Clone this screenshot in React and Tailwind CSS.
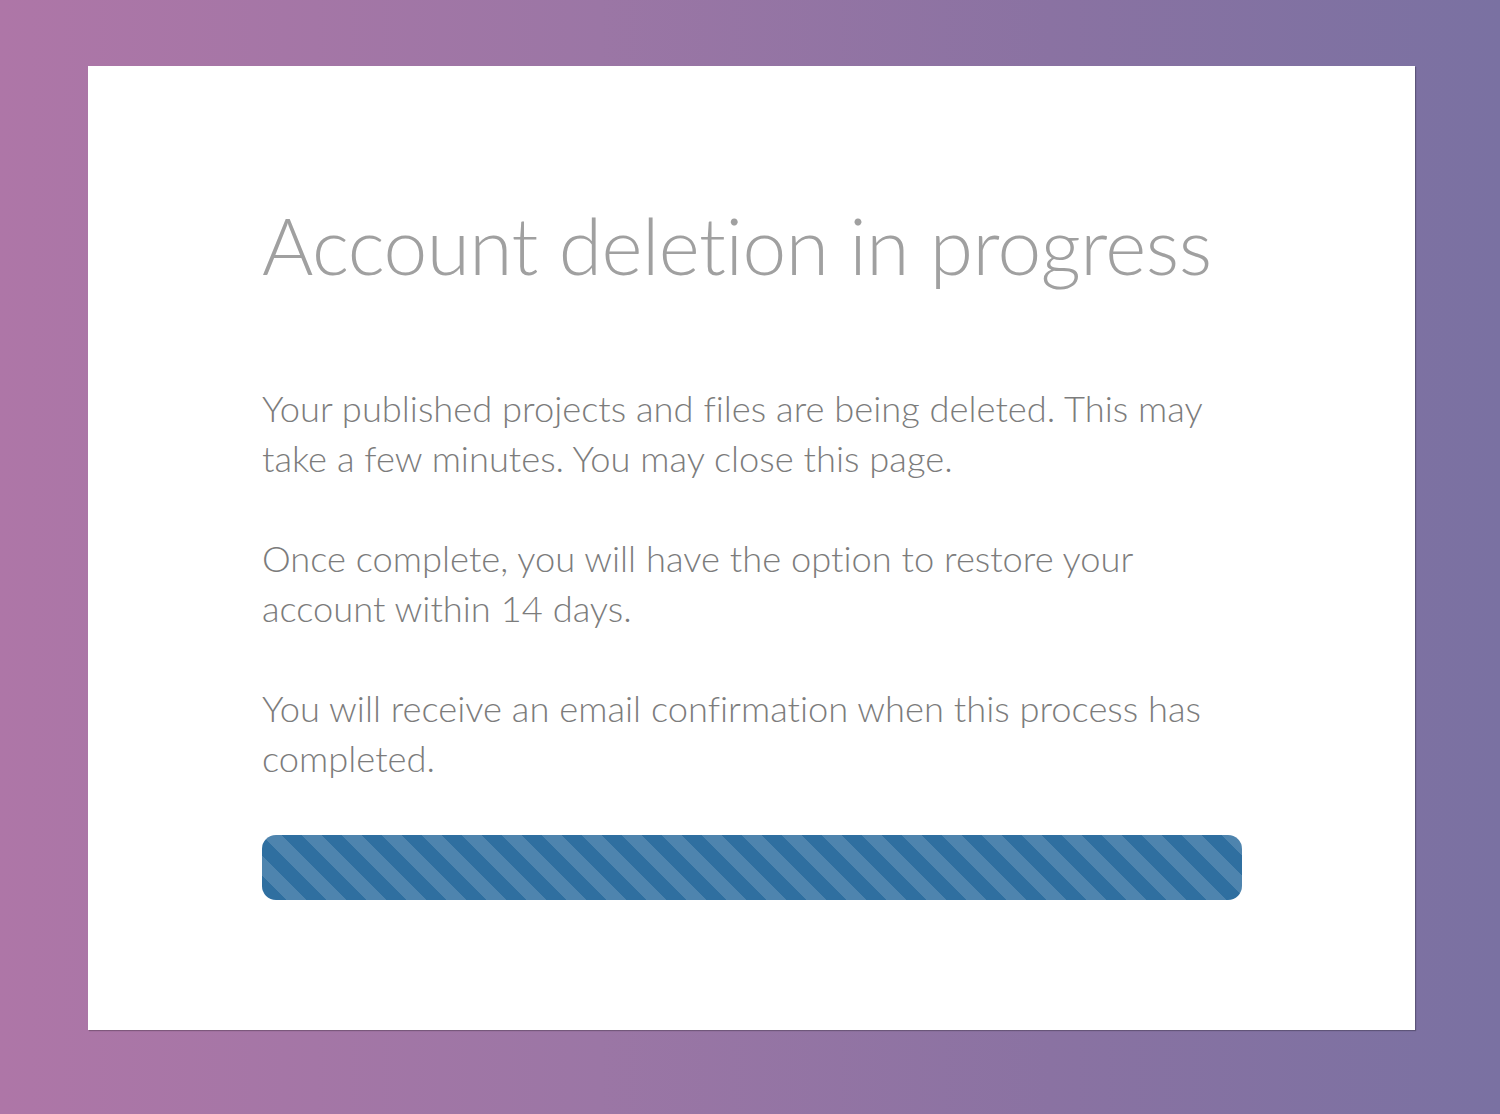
export default function App() {
  return (
    <div className="w-[1500px] h-[1114px] bg-[linear-gradient(90deg,#ae76a7_0%,#9b76a5_40%,#8a72a2_70%,#7a71a2_100%)] pt-[66px] pl-[88px] pr-[85px] pb-[84px] font-['Lato',sans-serif] [font-variant-ligatures:none]">
      <div className="w-[1327px] h-[964px] bg-white shadow-[1px_1px_1px_rgba(0,0,0,0.25)] pl-[174px] pt-[129px]">
        <div className="w-[980px]">
          <h1 className="text-[78.5px] leading-[100px] font-light text-[#a0a0a0] tracking-[-0.5px]">
            Account deletion in progress
          </h1>
          <div className="mt-[88px] text-[36.3px] leading-[50px] font-light text-[#7c7c7c]">
            <p>Your published projects and files are being deleted. This may take a few minutes. You may close this page.</p>
            <p className="mt-[50px]">Once complete, you will have the option to restore your account within 14 days.</p>
            <p className="mt-[50px]">You will receive an email confirmation when this process has completed.</p>
          </div>
          <div className="mt-[52px] h-[65px] w-[980px] rounded-[14px] bg-[#2f6fa0] bg-[linear-gradient(45deg,rgba(255,255,255,0.15)_25%,transparent_25%,transparent_50%,rgba(255,255,255,0.15)_50%,rgba(255,255,255,0.15)_75%,transparent_75%,transparent)] bg-[length:40px_40px]"></div>
        </div>
      </div>
    </div>
  );
}
